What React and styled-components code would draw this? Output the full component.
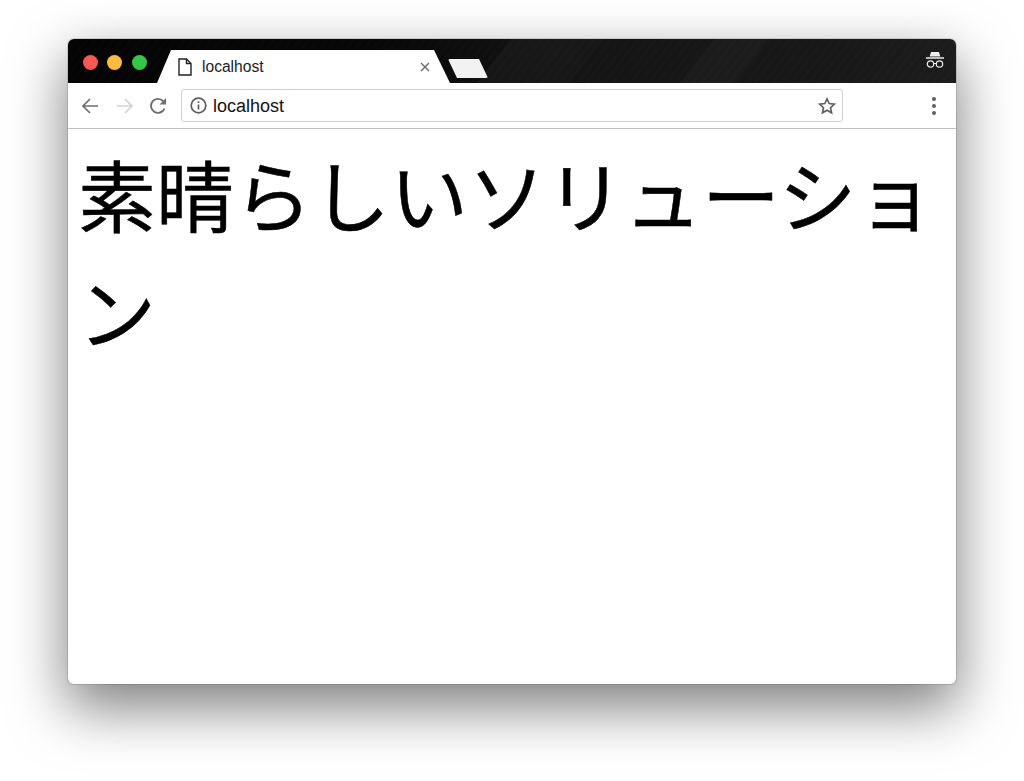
import React from "react";
import styled, { createGlobalStyle } from "styled-components";

const Global = createGlobalStyle`
  html, body {
    margin: 0;
    padding: 0;
    background: #fff;
  }
  body {
    font-family: "Liberation Sans", "Noto Sans CJK JP", sans-serif;
  }
`;

const Page = styled.div`
  width: 1024px;
  height: 781px;
  padding: 39px 68px 97px;
  box-sizing: border-box;
  overflow: hidden;
`;

const Window = styled.div`
  height: 645px;
  border-radius: 6px;
  overflow: hidden;
  background: #fff;
  display: flex;
  flex-direction: column;
  box-shadow: 0 22px 56px 2px rgba(0, 0, 0, 0.5), 0 0 0 1px rgba(0, 0, 0, 0.12);
`;

const TabStrip = styled.div`
  height: 44px;
  flex: none;
  display: flex;
  align-items: flex-end;
  padding-right: 11px;
  background:
    linear-gradient(128deg, transparent 70%, rgba(255, 255, 255, 0.025) 70%, rgba(255, 255, 255, 0.025) 76%, transparent 76%),
    linear-gradient(128deg, transparent 48%, rgba(255, 255, 255, 0.03) 48%, rgba(255, 255, 255, 0.012) 58%, transparent 58%),
    repeating-linear-gradient(128deg, rgba(255, 255, 255, 0.006) 0 3px, transparent 3px 7px),
    linear-gradient(90deg, #040404 0%, #070707 35%, #141414 55%, #181818 85%, #1c1c1c 100%);
`;

const Lights = styled.div`
  display: flex;
  gap: 9.5px;
  padding: 0 0 13px 14.500px;
  align-self: flex-end;
  width: 89px;
  box-sizing: border-box;
`;

const Light = styled.span`
  width: 15px;
  height: 15px;
  border-radius: 50%;
  background: ${(p) => p.$color};
`;

const Tab = styled.div`
  width: 293px;
  height: 33px;
  display: flex;
  align-items: center;
  padding: 0 20px 0 21px;
  box-sizing: border-box;
  background: #fff;
  clip-path: polygon(0 100%, 14px 0, 277px 0, 293px 100%);
  font-size: 15.6px;
  color: #222;
`;

const TabTitle = styled.span`
  flex: 1;
  margin-left: 10px;
`;

const NewTab = styled.div`
  width: 40px;
  height: 19px;
  margin: 0 0 5px -2px;
  background: #f2f2f2;
  border-radius: 2px;
  clip-path: polygon(0 0, 31px 0, 40px 100%, 9px 100%);
`;

const Spacer = styled.div`
  flex: 1;
`;

const Incognito = styled.svg`
  width: 20px;
  height: 20px;
  align-self: center;
  display: block;
`;

const Toolbar = styled.div`
  height: 46px;
  flex: none;
  display: flex;
  align-items: center;
  padding: 0 12px;
  box-sizing: border-box;
  background: #fff;
  border-bottom: 1px solid #c0c0c0;
`;

const NavIcon = styled.svg`
  width: 20px;
  height: 20px;
  flex: none;
  margin-right: ${(p) => p.$gap || 0}px;
`;

const Omnibox = styled.div`
  width: 662px;
  height: 33px;
  margin-left: 13px;
  display: flex;
  align-items: center;
  padding: 0 6px 0 8px;
  box-sizing: border-box;
  border: 1px solid #cfcfcf;
  border-radius: 3px;
  font-size: 18px;
  color: #111;
`;

const Address = styled.span`
  flex: 1;
  margin-left: 6px;
  padding-top: 1px;
`;

const Menu = styled.div`
  margin-left: auto;
  margin-right: 8px;
  display: flex;
  flex-direction: column;
  gap: 3px;
`;

const MenuDot = styled.span`
  width: 4px;
  height: 4px;
  border-radius: 50%;
  background: #5f5f5f;
`;

const Content = styled.main`
  flex: 1;
  padding: 6px 10px;
`;

const Heading = styled.h1`
  margin: 0;
  font-family: "Noto Sans CJK JP", sans-serif;
  font-size: 78px;
  line-height: 117px;
  font-weight: 400;
  -webkit-text-stroke: 0.5px #000;
  color: #000;
`;

export default function App() {
  return (
    <Page>
      <Global />
      <Window>
        <TabStrip>
          <Lights>
            <Light $color="#fc5753" />
            <Light $color="#fdbc40" />
            <Light $color="#33c748" />
          </Lights>
          <Tab>
            <svg width="14" height="18" viewBox="0 0 14 18" fill="none" stroke="#222" strokeWidth="1.4">
              <path d="M1 1h7.500L13 5.500V17H1z" />
              <path d="M8.500 1v4.500H13" />
            </svg>
            <TabTitle>localhost</TabTitle>
            <svg width="10" height="10" viewBox="0 0 10 10" stroke="#666" strokeWidth="1.4">
              <path d="M1 1l8 8M9 1l-8 8" />
            </svg>
          </Tab>
          <NewTab />
          <Spacer />
          <Incognito viewBox="0 0 20 20" fill="none" stroke="#eee" strokeWidth="1.2">
            <path d="M5.500 5L6.500 1.500h7L14.500 5z" fill="#eee" />
            <path d="M1 7h18" strokeWidth="1.6" />
            <circle cx="5.500" cy="13" r="3.200" />
            <circle cx="14.500" cy="13" r="3.200" />
            <path d="M8.700 12.500h2.600" />
          </Incognito>
        </TabStrip>
        <Toolbar>
          <NavIcon $gap={15} viewBox="0 0 20 20" fill="none" stroke="#6e6e6e" strokeWidth="1.7">
            <path d="M18 10H3M10 3l-7 7 7 7" />
          </NavIcon>
          <NavIcon $gap={13} viewBox="0 0 20 20" fill="none" stroke="#d2d2d2" strokeWidth="1.7">
            <path d="M2 10h15M10 3l7 7-7 7" />
          </NavIcon>
          <NavIcon viewBox="0 0 20 20" fill="none" stroke="#6e6e6e" strokeWidth="1.9">
            <path d="M16.500 12.500a7 7 0 1 1-1.300-7.300L17.500 7.500" />
            <path d="M18 2v6.500h-6.500" fill="#6e6e6e" stroke="none" />
          </NavIcon>
          <Omnibox>
            <svg width="17" height="17" viewBox="0 0 17 17" fill="none" stroke="#5f5f5f" strokeWidth="1.700">
              <circle cx="8.500" cy="8.500" r="7.300" />
              <path d="M8.500 7.500v5" />
              <path d="M8.500 4.300v1.700" />
            </svg>
            <Address>localhost</Address>
            <svg width="18" height="18" viewBox="0 0 24 24" fill="none" stroke="#5f5f5f" strokeWidth="2.200">
              <path d="M12 2.500l2.900 6.300 6.900.8-5.100 4.700 1.400 6.800-6.100-3.400-6.100 3.400 1.400-6.800-5.100-4.700 6.900-.8z" />
            </svg>
          </Omnibox>
          <Menu>
            <MenuDot />
            <MenuDot />
            <MenuDot />
          </Menu>
        </Toolbar>
        <Content>
          <Heading>素晴らしいソリューション</Heading>
        </Content>
      </Window>
    </Page>
  );
}
